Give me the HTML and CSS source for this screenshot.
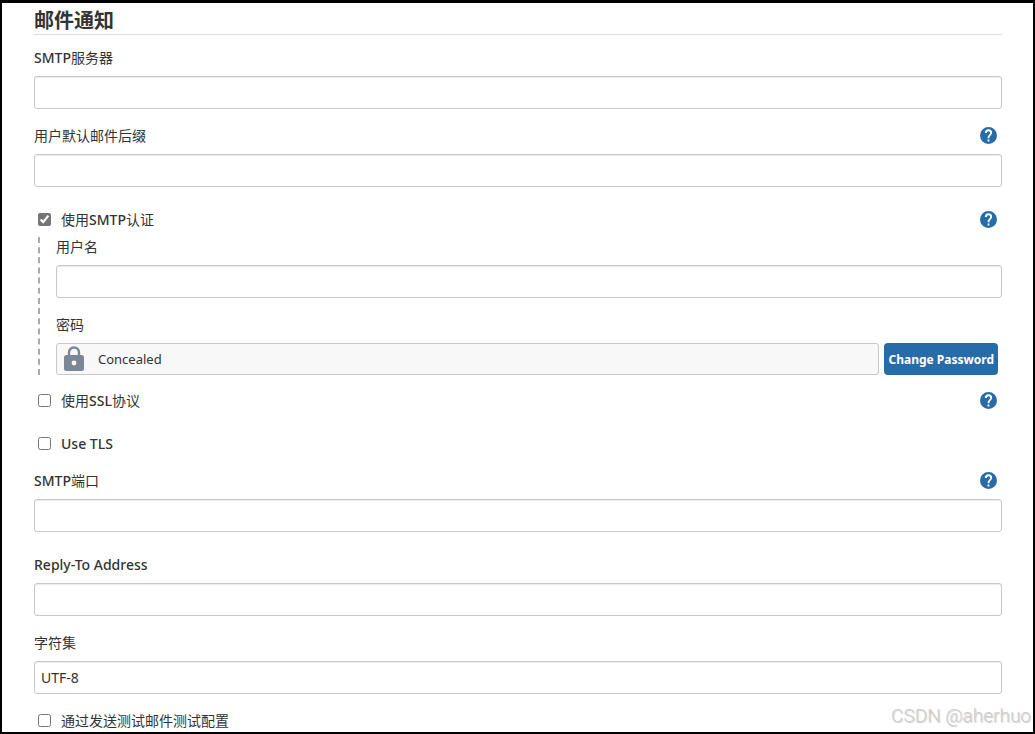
FILE: index.html
```
<!DOCTYPE html>
<html lang="zh-CN">
<head>
    <meta charset="UTF-8">
    <meta name="viewport" content="width=device-width, initial-scale=1.0">
    <title>邮件通知</title>
    <link rel="stylesheet" href="styles.css">
</head>
<body>

    <svg class="sprite" width="0" height="0" aria-hidden="true">
        <symbol id="help" viewBox="0 0 24 24">
            <path d="M12 0a12 12 0 1 0 0 24 12 12 0 0 0 0-24zm1.3 20.3h-2.6v-2.6h2.6zm2.6-9.2-1.1 1.2c-1 1-1.5 1.8-1.5 3.6h-2.6v-.7c0-1.400.5-2.600 1.500-3.600l1.500-1.600c.5-.4.700-1 .700-1.700a2.400 2.400 0 0 0-4.800 0H6.900a5.100 5.100 0 0 1 10.200 0c0 1.100-.5 2.100-1.200 2.800z"/>
        </symbol>
    </svg>

    <form class="config">
        <h1 class="section-title">邮件通知</h1>

        <div class="field">
            <div class="field-head">
                <label for="smtpServer"><span class="medium">SMTP</span>服务器</label>
            </div>
            <input class="text-input" type="text" id="smtpServer">
        </div>

        <div class="field">
            <div class="field-head">
                <label for="suffix">用户默认邮件后缀</label>
                <button class="help-button" type="button" aria-label="Help"><svg><use href="#help"/></svg></button>
            </div>
            <input class="text-input" type="text" id="suffix">
        </div>

        <div class="check-row space-above">
            <input class="checkbox" type="checkbox" id="useAuth" checked>
            <label for="useAuth">使用<span class="medium">SMTP</span>认证</label>
            <button class="help-button" type="button" aria-label="Help"><svg><use href="#help"/></svg></button>
        </div>

        <div class="nested">
            <div class="field">
                <div class="field-head">
                    <label for="username">用户名</label>
                </div>
                <input class="text-input" type="text" id="username">
            </div>
            <div class="field">
                <div class="field-head">
                    <label for="changePassword">密码</label>
                </div>
                <div class="password">
                    <div class="concealed">
                        <svg class="lock" viewBox="0 0 20 26">
                            <path class="shackle" d="M5 11V6.500a5 5 0 0 1 10 0V11"/>
                            <path d="M2.500 9h15A2.500 2.500 0 0 1 20 11.500v11a2.500 2.500 0 0 1-2.500 2.500h-15A2.500 2.500 0 0 1 0 22.500v-11A2.500 2.500 0 0 1 2.500 9zM10 14.600a2.400 2.400 0 1 0 0 4.800 2.400 2.400 0 0 0 0-4.800z"/>
                        </svg>
                        <span>Concealed</span>
                    </div>
                    <button class="change-button" type="button" id="changePassword">Change Password</button>
                </div>
            </div>
        </div>

        <div class="check-row">
            <input class="checkbox" type="checkbox" id="useSsl">
            <label for="useSsl">使用<span class="medium">SSL</span>协议</label>
            <button class="help-button" type="button" aria-label="Help"><svg><use href="#help"/></svg></button>
        </div>

        <div class="check-row space-above">
            <input class="checkbox" type="checkbox" id="useTls">
            <label class="medium" for="useTls">Use TLS</label>
        </div>

        <div class="field">
            <div class="field-head">
                <label for="port"><span class="medium">SMTP</span>端口</label>
                <button class="help-button" type="button" aria-label="Help"><svg><use href="#help"/></svg></button>
            </div>
            <input class="text-input" type="text" id="port">
        </div>

        <div class="field space-above">
            <div class="field-head">
                <label class="medium" for="replyTo">Reply-To Address</label>
            </div>
            <input class="text-input" type="text" id="replyTo">
        </div>

        <div class="field">
            <div class="field-head">
                <label for="charset">字符集</label>
            </div>
            <input class="text-input" type="text" id="charset" value="UTF-8">
        </div>

        <div class="check-row">
            <input class="checkbox" type="checkbox" id="sendTest">
            <label for="sendTest">通过发送测试邮件测试配置</label>
        </div>
    </form>

    <div class="watermark">CSDN @aherhuo</div>

</body>
</html>
```
FILE: styles.css
```
* {
    box-sizing: border-box;
}

body {
    position: relative;
    margin: 0;
    min-height: 100vh;
    border: 2px solid #000;
    border-top-width: 3px;
    background-color: #fff;
    color: #333;
    font-family: "Noto Sans", "Noto Sans CJK SC", sans-serif;
    font-size: 14px;
    line-height: 20px;
}

.sprite {
    position: absolute;
}

.config {
    padding: 0 31px 0 32px;
}

.section-title {
    margin: 0 0 13px;
    padding: 6px 0 1px;
    border-bottom: 1px solid #ddd;
    font-size: 20px;
    line-height: 24px;
    font-weight: bold;
}

.field {
    margin-bottom: 17px;
}

.field-head {
    display: flex;
    justify-content: space-between;
    align-items: center;
    height: 20px;
    margin-bottom: 8px;
}

.medium {
    font-weight: 500;
}

.text-input {
    display: block;
    width: 100%;
    height: 33px;
    padding: 6px;
    border: 1px solid #c8c8c8;
    border-radius: 3px;
    box-shadow: inset 0 1px 1px rgba(0, 0, 0, 0.08);
    background-color: #fff;
    color: #333;
    font-family: inherit;
    font-size: 14px;
}

.check-row {
    display: flex;
    align-items: center;
    height: 20px;
    margin-bottom: 17px;
}

.check-row:last-child {
    margin-bottom: 0;
}

.space-above {
    margin-top: 23px;
}

.checkbox {
    width: 13px;
    height: 13px;
    margin: 0 10px 2px 4px;
    accent-color: #767676;
}

.help-button {
    width: 17px;
    height: 17px;
    margin: 0 5px 2px auto;
    padding: 0;
    border: none;
    background: none;
    cursor: pointer;
}

.help-button svg {
    display: block;
    width: 17px;
    height: 17px;
    fill: #266ca9;
}

.nested {
    margin: -10px 0 16px 4px;
    padding-left: 16px;
    border-left: 2px dashed #aaa;
}

.nested .field:last-child {
    margin-bottom: 0;
}

.password {
    display: flex;
    gap: 5px;
    margin-right: 4px;
}

.concealed {
    display: flex;
    flex: 1;
    align-items: center;
    gap: 14px;
    height: 32px;
    padding-left: 7px;
    border: 1px solid #c8c8c8;
    border-radius: 3px;
    background-color: #f8f8f8;
    font-size: 13px;
}

.lock {
    width: 20px;
    height: 26px;
    fill: #7b8797;
    fill-rule: evenodd;
}

.shackle {
    fill: none;
    stroke: #7b8797;
    stroke-width: 2.4;
}

.change-button {
    height: 32px;
    padding: 0 4px;
    border: none;
    border-radius: 4px;
    background-color: #266ca9;
    color: #fff;
    font-family: inherit;
    font-size: 12px;
    font-weight: bold;
    cursor: pointer;
}

.watermark {
    position: absolute;
    right: 2px;
    bottom: 4px;
    color: #ccc;
    font-family: Roboto, sans-serif;
    font-size: 19px;
    line-height: 24px;
    font-weight: 300;
    text-shadow: 1px 1px 1px #ccc;
}
```
